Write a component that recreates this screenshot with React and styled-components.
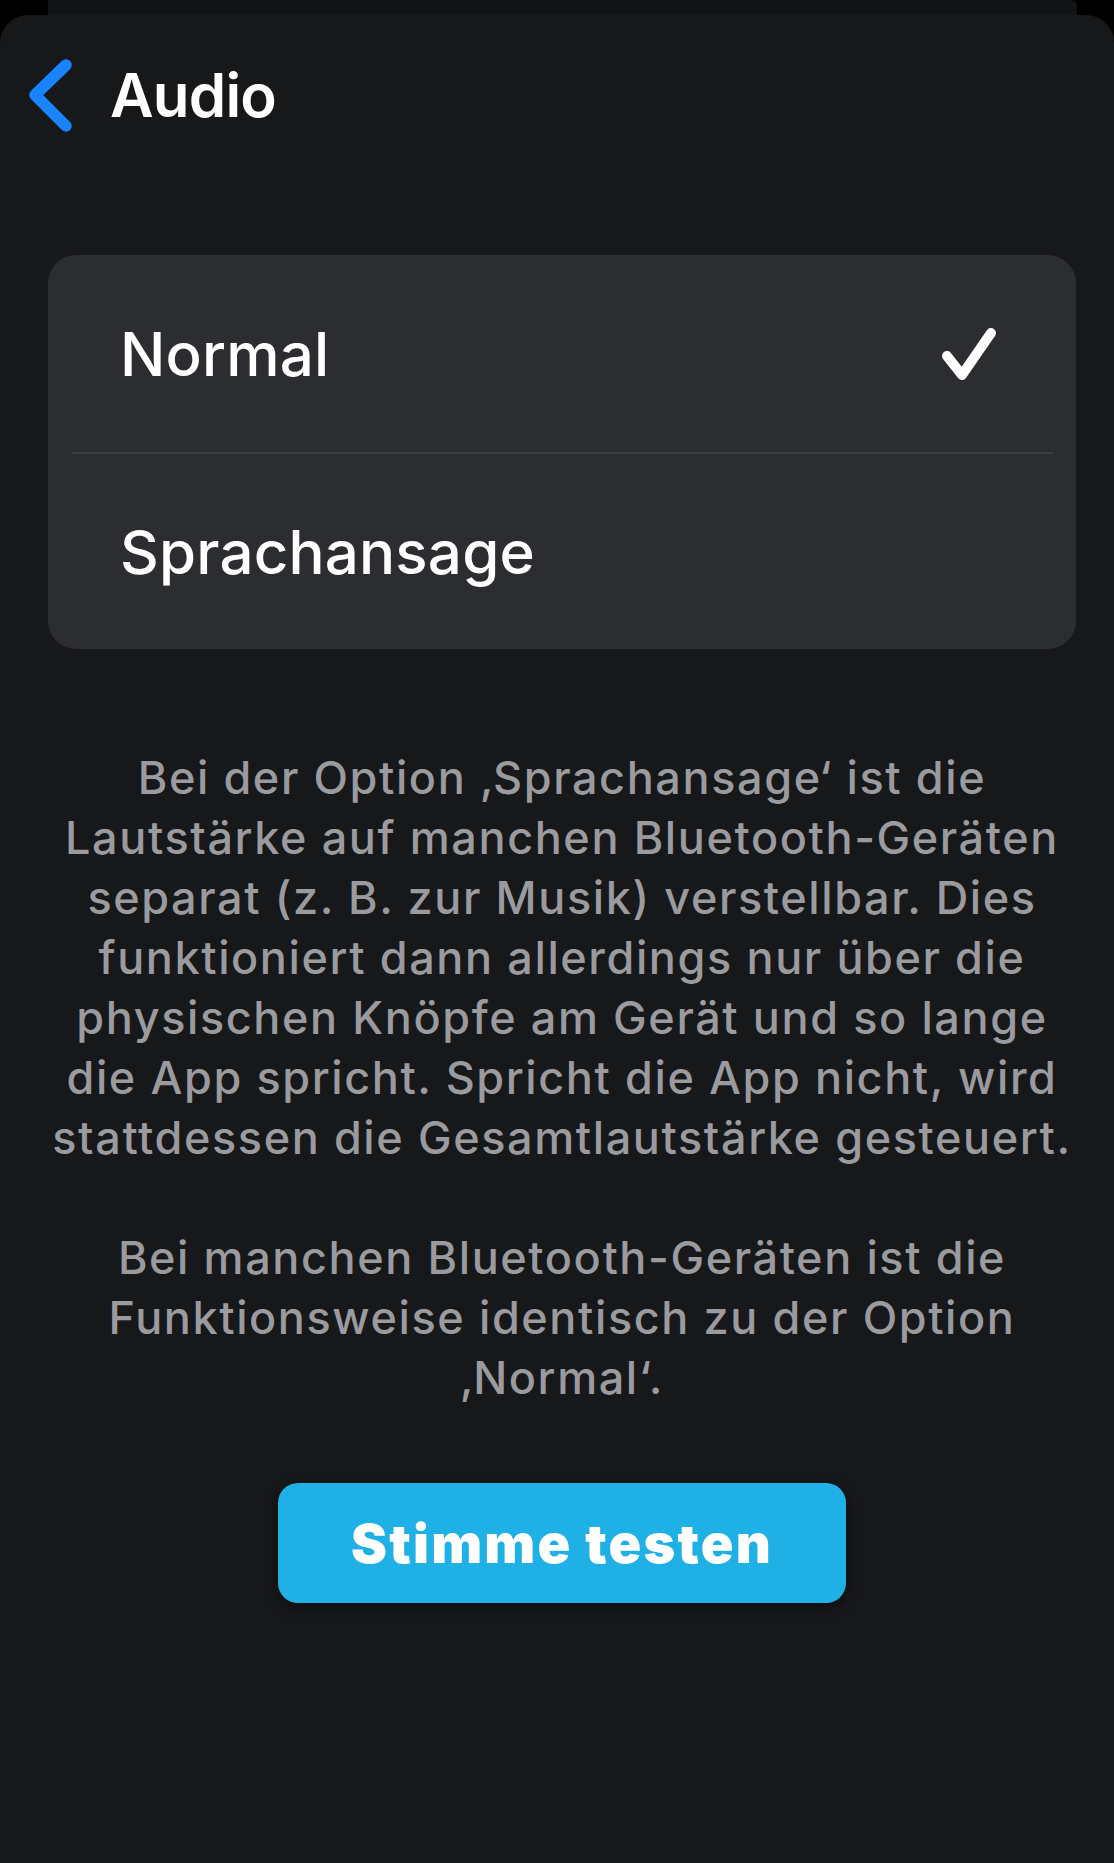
import React from "react";
import styled, { createGlobalStyle } from "styled-components";

const Global = createGlobalStyle`
  html, body { margin: 0; padding: 0; background: #000; }
  body { font-family: Inter, "Noto Sans", "Liberation Sans", sans-serif; -webkit-font-smoothing: antialiased; }
  * { box-sizing: border-box; }
`;

const Screen = styled.div`
  min-height: 1863px;
  display: flex;
  flex-direction: column;
  background: #000;
`;

const BackSheet = styled.div`
  height: 15px;
  margin: 0 37px 0 48px;
  background: #121315;
  border-radius: 0 6px 0 0;
`;

const Sheet = styled.div`
  flex: 1;
  background: #17181a;
  border-radius: 28px 28px 0 0;
  display: flex;
  flex-direction: column;
`;

const Header = styled.header`
  height: 160px;
  display: flex;
  align-items: center;
  gap: 34px;
  padding-left: 26px;
`;

const Title = styled.h1`
  margin: 0;
  font-size: 60px;
  font-weight: 600;
  color: #fff;
  letter-spacing: -0.8px;
`;

const Card = styled.div`
  margin: 80px 38px 0 48px;
  background: #2c2d30;
  border-radius: 28px;
  overflow: hidden;
`;

const Row = styled.div`
  height: ${(p) => p.$h}px;
  display: flex;
  align-items: center;
  justify-content: space-between;
  padding: 0 80px 0 72px;
`;

const RowLabel = styled.span`
  font-size: 60px;
  font-weight: 500;
  color: #fff;
  letter-spacing: 0.2px;
`;

const Divider = styled.div`
  height: 2px;
  margin: 0 23px 0 24px;
  background: #3b3c40;
`;

const Info = styled.p`
  margin: ${(p) => p.$top}px 38px 0 48px;
  font-size: 45px;
  line-height: 60px;
  font-weight: 500;
  color: #9b9b9f;
  text-align: center;
  letter-spacing: 1.6px;
  white-space: nowrap;
`;

const Button = styled.button`
  align-self: center;
  margin: 75px 0 0 10px;
  width: 568px;
  height: 120px;
  border: none;
  border-radius: 20px;
  background: #1fb0e6;
  box-shadow: 0 4px 12px rgba(0, 0, 0, 0.45);
  color: #fff;
  font-family: Inter, "Noto Sans", sans-serif;
  font-size: 54px;
  font-weight: 900;
  letter-spacing: 2.2px;
  cursor: pointer;
`;

const Chevron = () => (
  <svg width="50" height="78" viewBox="0 0 50 78" fill="none">
    <path d="M40 9 L9 39 L40 70" stroke="#1a84ff" strokeWidth="11.5" strokeLinecap="round" strokeLinejoin="round" />
  </svg>
);

const Check = () => (
  <svg width="54" height="52" viewBox="0 0 54 52" fill="none">
    <path d="M5 28 L20 47 L49 5" stroke="#fff" strokeWidth="10" strokeLinecap="round" strokeLinejoin="round" />
  </svg>
);

export default function App() {
  return (
    <>
      <Global />
      <Screen>
        <BackSheet />
        <Sheet>
          <Header>
            <Chevron />
            <Title>Audio</Title>
          </Header>
          <Card>
            <Row $h={197}>
              <RowLabel>Normal</RowLabel>
              <Check />
            </Row>
            <Divider />
            <Row $h={195}>
              <RowLabel>Sprachansage</RowLabel>
            </Row>
          </Card>
          <Info $top={99}>
            Bei der Option ‚Sprachansage‘ ist die
            <br />
            Lautstärke auf manchen Bluetooth-Geräten
            <br />
            separat (z. B. zur Musik) verstellbar. Dies
            <br />
            funktioniert dann allerdings nur über die
            <br />
            physischen Knöpfe am Gerät und so lange
            <br />
            die App spricht. Spricht die App nicht, wird
            <br />
            stattdessen die Gesamtlautstärke gesteuert.
          </Info>
          <Info $top={60}>
            Bei manchen Bluetooth-Geräten ist die
            <br />
            Funktionsweise identisch zu der Option
            <br />
            ‚Normal‘.
          </Info>
          <Button>Stimme testen</Button>
        </Sheet>
      </Screen>
    </>
  );
}
